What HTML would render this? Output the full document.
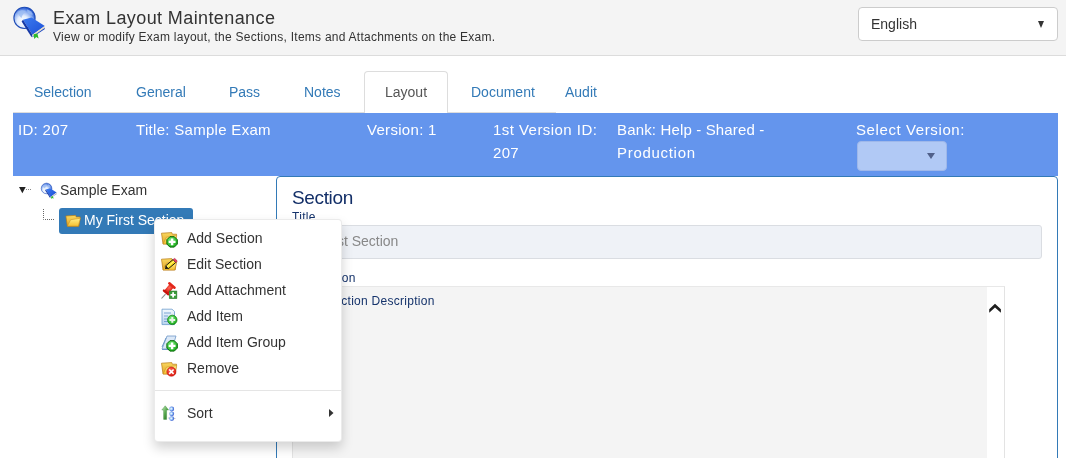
<!DOCTYPE html>
<html><head><meta charset="utf-8">
<style>
*{box-sizing:border-box;margin:0;padding:0}
html,body{width:1066px;height:458px;overflow:hidden;background:#fff;font-family:"Liberation Sans",sans-serif;color:#333}
.abs{position:absolute;will-change:transform}
#hdr{left:0;top:0;width:1066px;height:56px;background:#f4f4f4;border-bottom:1px solid #dcdcdc}
#htitle{left:53px;top:8px;font-size:18px;letter-spacing:0.4px;color:#333;white-space:nowrap}
#hsub{left:53px;top:30px;font-size:12px;letter-spacing:0.25px;color:#333;white-space:nowrap}
#lang{left:858px;top:7px;width:200px;height:34px;background:#fff;border:1px solid #ccc;border-radius:4px}
#lang span{position:absolute;left:12px;top:8px;font-size:14px;color:#333}
#lang i{position:absolute;left:178.5px;top:13px;width:0;height:0;border-left:3.75px solid transparent;border-right:3.75px solid transparent;border-top:7px solid #333}
#navline{left:13px;top:112px;width:543px;height:1px;background:#ddd}
.tab{top:84px;font-size:14px;color:#337ab7;white-space:nowrap}
#acttab{left:364px;top:71px;width:84px;height:43px;border:1px solid #ddd;border-bottom:none;border-radius:4px 4px 0 0;background:#fff}
#bar{left:13px;top:113px;width:1045px;height:63px;background:#6495ed}
.bt{top:118px;font-size:15px;color:#fff;white-space:nowrap;line-height:23px;letter-spacing:0.3px}
#vsel{left:857px;top:141px;width:90px;height:30px;background:#b1c9f5;border-radius:4px;border:1px solid #9fb8ea}
#vsel i{position:absolute;left:68.5px;top:11px;width:0;height:0;border-left:4px solid transparent;border-right:4px solid transparent;border-top:6.5px solid #50608a}
#panel{left:276px;top:176px;width:782px;height:300px;border:1px solid #337ab7;border-radius:4px 4px 0 0;background:#fff}
#sech{left:292px;top:187px;font-size:19px;letter-spacing:-0.35px;color:#132f68;white-space:nowrap}
.lbl{font-size:12px;color:#15336b;white-space:nowrap}
#tinput{left:292px;top:225px;width:750px;height:34px;background:#eff2f7;border:1px solid #dadde2;border-radius:3px}
#tinput span{position:absolute;left:5px;top:7px;font-size:14px;color:#888}
#desc{left:292px;top:286px;width:713px;height:200px;background:#f4f4f4;border-top:1px solid #e8e8e8;border-right:1px solid #e3e3e3;border-left:1px solid #e3e3e3}
#desc .sb{position:absolute;right:0;top:0;width:17px;height:200px;background:#fff}
#desctext{left:325.5px;top:294px;font-size:12px;letter-spacing:0.28px;color:#15336b;white-space:nowrap}
#tree1{left:60px;top:182px;font-size:14px;color:#333;white-space:nowrap}
#selnode{left:59px;top:208px;width:134px;height:26px;background:#337ab7;border-radius:3px}
#selnode span{position:absolute;left:25px;top:4px;font-size:14px;color:#fff;white-space:nowrap}
#menu{left:154px;top:219px;width:188px;height:223px;background:#fff;border:1px solid rgba(0,0,0,.08);border-radius:4px;box-shadow:0 6px 12px rgba(0,0,0,.175)}
.mi{left:187px;font-size:14px;color:#333;white-space:nowrap}
#msep{left:155px;top:390px;width:186px;height:1px;background:#e5e5e5}
</style></head><body>
<div id="hdr" class="abs"></div>
<div id="htitle" class="abs">Exam Layout Maintenance</div>
<div id="hsub" class="abs">View or modify Exam layout, the Sections, Items and Attachments on the Exam.</div>
<div id="lang" class="abs"><span>English</span><i></i></div>

<div id="navline" class="abs"></div>
<div id="acttab" class="abs"></div>
<div class="abs tab" style="left:34px">Selection</div>
<div class="abs tab" style="left:135.5px">General</div>
<div class="abs tab" style="left:229px">Pass</div>
<div class="abs tab" style="left:304px">Notes</div>
<div class="abs tab" style="left:385px;color:#555">Layout</div>
<div class="abs tab" style="left:471px">Document</div>
<div class="abs tab" style="left:565px">Audit</div>

<div id="bar" class="abs"></div>
<div class="abs bt" style="left:18px">ID: 207</div>
<div class="abs bt" style="left:136px">Title: Sample Exam</div>
<div class="abs bt" style="left:367px">Version: 1</div>
<div class="abs bt" style="left:493px"><span style="letter-spacing:0.45px">1st Version ID:</span><br>207</div>
<div class="abs bt" style="left:617px"><span style="letter-spacing:0.15px">Bank: Help - Shared -</span><br><span style="letter-spacing:0.7px">Production</span></div>
<div class="abs bt" style="left:856px;letter-spacing:0.6px">Select Version:</div>
<div id="vsel" class="abs"><i></i></div>

<div id="panel" class="abs"></div>
<div id="sech" class="abs">Section</div>
<div class="abs lbl" style="left:292px;top:210px;letter-spacing:0.3px">Title</div>
<div id="tinput" class="abs"><span>My First Section</span></div>
<div class="abs lbl" style="left:292px;top:271px;letter-spacing:0.35px">Description</div>
<div id="desc" class="abs"><div class="sb"></div></div>
<div id="desctext" class="abs">Section Description</div>

<div id="tree1" class="abs">Sample Exam</div>
<div id="selnode" class="abs"><span>My First Section</span></div>


<svg class="abs" style="left:0;top:0;position:absolute" width="1066" height="458" viewBox="0 0 1066 458">
<defs>
<radialGradient id="gGlobe" cx="0.42" cy="0.62" r="0.62" fx="0.42" fy="0.7">
<stop offset="0" stop-color="#ffffff"/><stop offset="0.42" stop-color="#e4eefd"/><stop offset="0.75" stop-color="#86aaf0"/><stop offset="1" stop-color="#1d52d0"/></radialGradient>
<linearGradient id="gBook" x1="0" y1="0" x2="1" y2="1"><stop offset="0" stop-color="#3b7bf0"/><stop offset="1" stop-color="#1d4fd6"/></linearGradient>
<linearGradient id="gFb" x1="0" y1="0" x2="0" y2="1"><stop offset="0" stop-color="#f9d860"/><stop offset="1" stop-color="#e2a424"/></linearGradient>
<linearGradient id="gFf" x1="0" y1="0" x2="0" y2="1"><stop offset="0" stop-color="#fff08a"/><stop offset="1" stop-color="#f5c030"/></linearGradient>
<radialGradient id="gGreen" cx="0.4" cy="0.35" r="0.7"><stop offset="0" stop-color="#7ef07e"/><stop offset="1" stop-color="#16a816"/></radialGradient>
<radialGradient id="gRed" cx="0.4" cy="0.35" r="0.7"><stop offset="0" stop-color="#ff6a5a"/><stop offset="1" stop-color="#d8140a"/></radialGradient>
<radialGradient id="gBall" cx="0.4" cy="0.45" r="0.6"><stop offset="0" stop-color="#ffffff"/><stop offset="0.45" stop-color="#9cc8f8"/><stop offset="1" stop-color="#2246c8"/></radialGradient><linearGradient id="gArrow" x1="0" y1="0" x2="1" y2="1"><stop offset="0" stop-color="#d0f0c8"/><stop offset="0.5" stop-color="#5aaa50"/><stop offset="1" stop-color="#1a6a1a"/></linearGradient>
<linearGradient id="gDoc" x1="0" y1="0" x2="0" y2="1"><stop offset="0" stop-color="#f4f9fe"/><stop offset="1" stop-color="#b9d3ee"/></linearGradient>
</defs>
<!-- header icon -->
<g>
<circle cx="24.5" cy="17.9" r="10.6" fill="url(#gGlobe)" stroke="#1f4cb6" stroke-width="1.1"/>
<path d="M18,12 C20,10 23,9.5 26,11 C24,13 22,15 21.5,18 C20,17 18.5,15 18,12Z" fill="#9cbdf2" opacity="0.8"/>
<path d="M27,9.5 C30,10 32,12 33,14.5 C31,15 29,14 27.5,12.5Z" fill="#9cbdf2" opacity="0.8"/>
<path d="M23,19.8 L31.5,17.6 L44.8,25.9 L32.5,34.8 Z" fill="url(#gBook)"/>
<path d="M23,19.8 L32.5,34.8 L31.6,37.2 L21.6,21.4 Z" fill="#1538a6"/>
<path d="M32.5,34.8 L44.8,25.9 L44.9,27.8 L32.9,36.3 Z" fill="#e9dfc6"/>
<path d="M32.9,36.3 L44.9,27.8 L44.6,29.2 L31.9,37.4 Z" fill="#1a45c0"/>
<path d="M33.6,34.2 L37.4,33.4 L38.6,38.6 L36.2,37.1 L34.2,38.9 Z" fill="#2cba2c"/>
</g>
<!-- tree -->
<path d="M19,187 L25.7,187 L22.35,193.2 Z" fill="#222"/>
<path d="M26,189.5 H31" stroke="#888" stroke-width="1" stroke-dasharray="1,1"/>
<g transform="translate(34.3,179.5) scale(0.5)">
<circle cx="24.5" cy="17.9" r="10.6" fill="url(#gGlobe)" stroke="#1f4cb6" stroke-width="1.1"/>
<path d="M18,12 C20,10 23,9.5 26,11 C24,13 22,15 21.5,18 C20,17 18.5,15 18,12Z" fill="#9cbdf2" opacity="0.8"/>
<path d="M27,9.5 C30,10 32,12 33,14.5 C31,15 29,14 27.5,12.5Z" fill="#9cbdf2" opacity="0.8"/>
<path d="M23,19.8 L31.5,17.6 L44.8,25.9 L32.5,34.8 Z" fill="url(#gBook)"/>
<path d="M23,19.8 L32.5,34.8 L31.6,37.2 L21.6,21.4 Z" fill="#1538a6"/>
<path d="M32.5,34.8 L44.8,25.9 L44.9,27.8 L32.9,36.3 Z" fill="#e9dfc6"/>
<path d="M32.9,36.3 L44.9,27.8 L44.6,29.2 L31.9,37.4 Z" fill="#1a45c0"/>
<path d="M33.6,34.2 L37.4,33.4 L38.6,38.6 L36.2,37.1 L34.2,38.9 Z" fill="#2cba2c"/>
</g>
<path d="M43.5,209 V219.5 H54" stroke="#666" stroke-width="1" fill="none" stroke-dasharray="1,1"/>
<g transform="translate(65.4,214.8) scale(0.95)">
<path d="M0.5,1.2 L10.8,0.6 L11.3,2.2 L15.6,2.2 L14.2,12 L2,12 Z" fill="url(#gFb)" stroke="#b87a14" stroke-width="0.7" stroke-linejoin="round"/>
<path d="M2,12 L5.5,5.2 L15.8,3.6 L13.6,12 Z" fill="url(#gFf)" stroke="#c0841c" stroke-width="0.5" stroke-linejoin="round"/>
</g>
</svg>
<div id="menu" class="abs"></div>
<div class="abs mi" style="top:230px">Add Section</div>
<div class="abs mi" style="top:256px">Edit Section</div>
<div class="abs mi" style="top:282px">Add Attachment</div>
<div class="abs mi" style="top:308px">Add Item</div>
<div class="abs mi" style="top:334px">Add Item Group</div>
<div class="abs mi" style="top:360px">Remove</div>
<div id="msep" class="abs"></div>
<div class="abs mi" style="top:405px">Sort</div>
<svg class="abs" style="left:0;top:0;position:absolute" width="1066" height="458" viewBox="0 0 1066 458">
<!-- Add Section -->
<g transform="translate(161,232)">
<path d="M0.5,1.2 L10.8,0.6 L11.3,2.2 L15.6,2.2 L14.2,12 L2,12 Z" fill="url(#gFb)" stroke="#b87a14" stroke-width="0.7" stroke-linejoin="round"/>
<path d="M2,12 L5.5,5.2 L15.8,3.6 L13.6,12 Z" fill="url(#gFf)" stroke="#c0841c" stroke-width="0.5" stroke-linejoin="round"/>
</g>
<g transform="translate(172.1,241.9)">
<path d="M-2.2,-5.2 L2.2,-5.2 L5.2,-2.2 L5.2,2.2 L2.2,5.2 L-2.2,5.2 L-5.2,2.2 L-5.2,-2.2 Z" fill="url(#gGreen)" stroke="#066806" stroke-width="1"/>
<path d="M-1.2,-3.4 H1.2 V-1.2 H3.4 V1.2 H1.2 V3.4 H-1.2 V1.2 H-3.4 V-1.2 H-1.2 Z" fill="#fff"/>
</g>
<!-- Edit Section -->
<g transform="translate(161,258)">
<path d="M0.5,1.2 L10.8,0.6 L11.3,2.2 L15.6,2.2 L14.2,12 L2,12 Z" fill="url(#gFb)" stroke="#b87a14" stroke-width="0.7" stroke-linejoin="round"/>
<path d="M2,12 L5.5,5.2 L15.8,3.6 L13.6,12 Z" fill="url(#gFf)" stroke="#c0841c" stroke-width="0.5" stroke-linejoin="round"/>
</g>
<g transform="translate(170.8,264.1) rotate(-40)">
<rect x="-5" y="-2" width="9.8" height="4" fill="#ffe21a" stroke="#111" stroke-width="0.9"/>
<path d="M-5,-0.2 H4.8" stroke="#fff59a" stroke-width="0.8"/>
<rect x="4.8" y="-2" width="2" height="4" fill="#e84070" stroke="#a02040" stroke-width="0.4"/>
<path d="M-5,-2 L-7.6,0 L-5,2Z" fill="#111"/>
</g>
<!-- Add Attachment -->
<path d="M161.5,298.5 L165.5,294.2" stroke="#8a8a8a" stroke-width="1.1"/>
<g transform="translate(168.9,289.1) rotate(40)">
<rect x="-2.6" y="-4" width="5.2" height="8" fill="url(#gRed)"/>
<rect x="-4.6" y="-6" width="9.2" height="2.6" rx="1.2" fill="#e3261a"/>
<rect x="-4" y="3.2" width="8" height="2.3" rx="1.1" fill="#c8120c"/>
</g>
<rect x="169.2" y="291" width="7.7" height="7.7" fill="#3a9a3a" stroke="#2a7a2a" stroke-width="0.5"/>
<path d="M172.2,292.3 H174 V294 H175.7 V295.8 H174 V297.5 H172.2 V295.8 H170.5 V294 H172.2 Z" fill="#fff"/>
<!-- Add Item -->
<path d="M162,309.2 H172 L174.5,311.5 V324.6 H162 Z" fill="url(#gDoc)" stroke="#6a9ccc" stroke-width="0.8"/>
<path d="M164,313 H171 M164,316 H168 M164,319 H168 M164,321.5 H168" stroke="#7aa6d4" stroke-width="1"/>
<circle cx="172.3" cy="319.9" r="4.7" fill="url(#gGreen)" stroke="#0a7a0a" stroke-width="0.7"/>
<path d="M171.3,317 H173.3 V318.9 H175.2 V320.9 H173.3 V322.8 H171.3 V320.9 H169.4 V318.9 H171.3 Z" fill="#e8f4e8"/>
<!-- Add Item Group -->
<path d="M167,336 L176,336 L172,349 L162,349 Z" fill="#dbe8f7" stroke="#6f98c8" stroke-width="0.8"/>
<path d="M162,347 L166,338 M162,349.5 L171,349.5" stroke="#6f98c8" stroke-width="1"/>
<g transform="translate(172.1,345.9)">
<path d="M-2.2,-5.2 L2.2,-5.2 L5.2,-2.2 L5.2,2.2 L2.2,5.2 L-2.2,5.2 L-5.2,2.2 L-5.2,-2.2 Z" fill="url(#gGreen)" stroke="#066806" stroke-width="1"/>
<path d="M-1.2,-3.4 H1.2 V-1.2 H3.4 V1.2 H1.2 V3.4 H-1.2 V1.2 H-3.4 V-1.2 H-1.2 Z" fill="#fff"/>
</g>
<!-- Remove -->
<g transform="translate(161,362)">
<path d="M0.5,1.2 L10.8,0.6 L11.3,2.2 L15.6,2.2 L14.2,12 L2,12 Z" fill="url(#gFb)" stroke="#b87a14" stroke-width="0.7" stroke-linejoin="round"/>
<path d="M2,12 L5.5,5.2 L15.8,3.6 L13.6,12 Z" fill="url(#gFf)" stroke="#c0841c" stroke-width="0.5" stroke-linejoin="round"/>
</g>
<circle cx="171.4" cy="371.7" r="4.6" fill="url(#gRed)" stroke="#c01010" stroke-width="0.5"/>
<path d="M169.2,369.5 L173.6,373.9 M173.6,369.5 L169.2,373.9" stroke="#fff" stroke-width="1.6"/>
<!-- Sort -->
<path d="M168,418 L175.5,418.5" stroke="#c8c0c0" stroke-width="0.8"/>
<path d="M165.2,405.8 L168.6,410 L166.6,410 L166.6,419.4 L163.6,419.4 L163.6,410 L161.8,410 Z" fill="url(#gArrow)" stroke="#3a8a3a" stroke-width="0.4"/>
<circle cx="171.7" cy="409" r="2.4" fill="url(#gBall)"/>
<circle cx="171.7" cy="413.8" r="2.4" fill="url(#gBall)"/>
<circle cx="171.7" cy="418.6" r="2.4" fill="url(#gBall)"/>
<!-- sort submenu arrow -->
<path d="M329,409 L333.5,413 L329,417 Z" fill="#333"/>
<!-- chevron -->
<path d="M989.2,309.2 L995,303.7 L1000.9,309.2 L1000.9,312.8 L995,307.6 L989.2,312.8 Z" fill="#1e1e1e"/>
</svg>

</body></html>
